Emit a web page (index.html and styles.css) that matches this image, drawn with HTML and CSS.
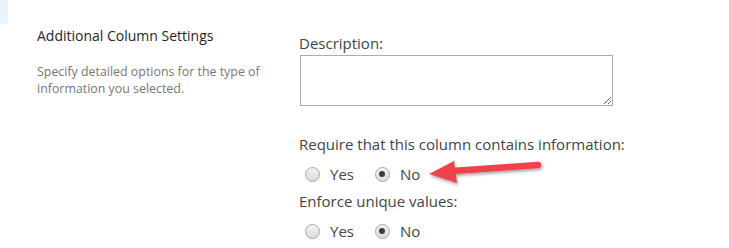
FILE: index.html
```html
<!DOCTYPE html>
<html lang="en">
<head>
  <meta charset="UTF-8">
  <title>Additional Column Settings</title>
  <link rel="stylesheet" href="styles.css">
</head>
<body>
  <div class="corner"></div>

  <div class="section">
    <!--LEFT: section title and help text-->
    <div class="section-info">
      <h3>Additional Column Settings</h3>
      <p>Specify detailed options for the type of information you selected.</p>
    </div>

    <!--RIGHT: the fields-->
    <div class="section-fields">
      <label class="field-label" for="desc">Description:</label>
      <textarea id="desc" class="desc-box"></textarea>

      <div class="field-label spaced">Require that this column contains information:</div>
      <div class="radio-row">
        <label><span class="radio"></span>Yes</label>
        <label><span class="radio checked"></span>No</label>
        <svg class="arrow" width="124" height="30" viewBox="0 0 124 30">
          <defs>
            <filter id="shadow" x="-10%" y="-40%" width="120%" height="180%">
              <feDropShadow dx="1" dy="2" stdDeviation="1.5" flood-color="#000" flood-opacity="0.35"/>
            </filter>
          </defs>
          <g filter="url(#shadow)">
            <line x1="112" y1="8" x2="26" y2="14" stroke="#f2424a" stroke-width="6.5" stroke-linecap="round"/>
            <polygon points="3,17 28,4 31,26" fill="#f2424a"/>
          </g>
        </svg>
      </div>

      <div class="field-label">Enforce unique values:</div>
      <div class="radio-row">
        <label><span class="radio"></span>Yes</label>
        <label><span class="radio checked"></span>No</label>
      </div>
    </div>
  </div>
</body>
</html>
```

FILE: styles.css
```css
body {
  margin: 0;
  background-color: white;
  font-family: 'Open Sans', 'Noto Sans', sans-serif;
  color: #444;
}
.corner {
  position: absolute;
  left: 0;
  top: 0;
  width: 8px;
  height: 24px;
  background-color: #e9f3fb;
  border-radius: 0 3px 4px 0;
}
.section {
  display: flex;
  padding-top: 26px;
}
.section-info {
  width: 242px;
  padding-left: 37px;
  padding-right: 20px;
}
.section-info h3 {
  margin: 0;
  font-size: 14px;
  font-weight: normal;
  color: #262626;
  line-height: 20px;
}
.section-info p {
  margin: 17px 0 0 0;
  font-size: 12.4px;
  line-height: 17px;
  color: #777;
}
.section-fields {
  display: flex;
  flex-direction: column;
  align-items: flex-start;
  padding-top: 7px;
}
.field-label {
  font-size: 15px;
  line-height: 20px;
  color: #444;
}
.field-label.spaced {
  margin-top: 28px;
}
.desc-box {
  width: 307px;
  height: 45px;
  margin: 2px 0 0 1px;
  border: 1px solid #ababab;
  padding: 2px;
  resize: vertical;
  font-family: inherit;
}
.radio-row {
  display: flex;
  align-items: center;
  height: 36px;
  margin-top: 2px;
  margin-bottom: -1px;
  padding-left: 6px;
}
.radio-row label {
  display: flex;
  align-items: center;
  font-size: 15px;
  color: #444;
  margin-right: 21px;
}
.radio {
  width: 13px;
  height: 13px;
  border: 1px solid #a8a8a8;
  border-radius: 50%;
  background: linear-gradient(#f2f2f2, #dcdcdc);
  margin-right: 10px;
  display: flex;
  align-items: center;
  justify-content: center;
}
.radio.checked::after {
  content: "";
  width: 6px;
  height: 6px;
  border-radius: 50%;
  background-color: #3c3c3c;
}
.arrow {
  margin-left: -15px;
  margin-top: -4px;
}
```
